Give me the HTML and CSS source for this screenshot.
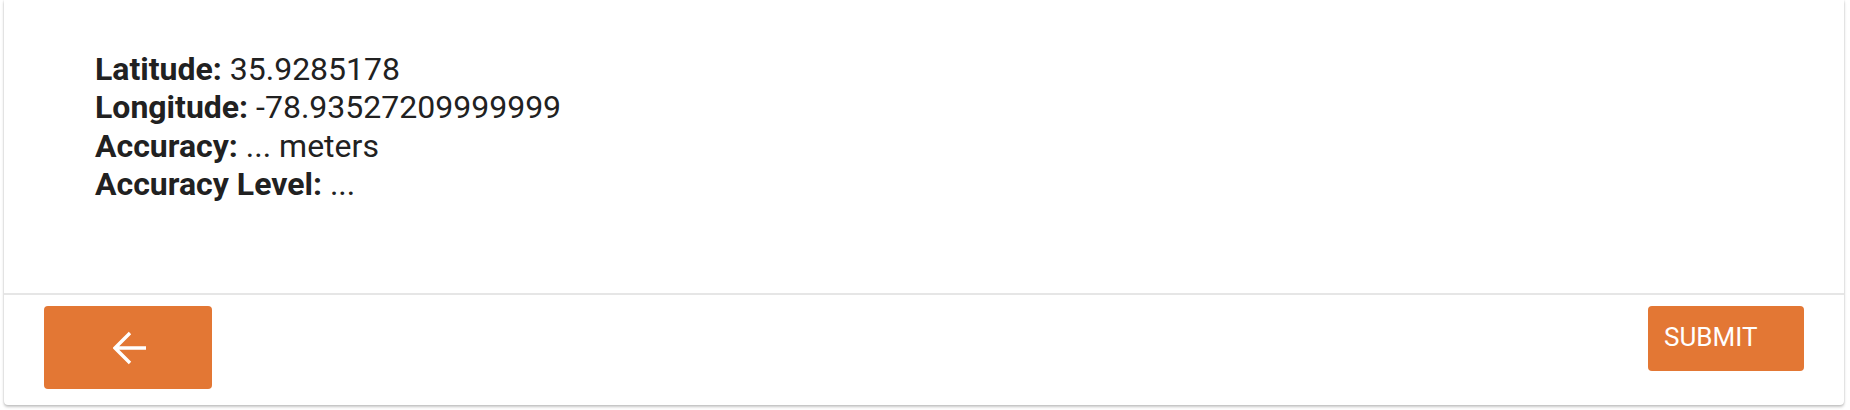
FILE: index.html
```html
<!DOCTYPE html>
<html lang="en">
<head>
<meta charset="utf-8">
<title>Location</title>
<link rel="stylesheet" href="styles.css">
</head>
<body>
<div class="page">
  <div class="card">
    <div class="card-body">
      <div class="info-line"><span class="label">Latitude:</span> 35.9285178</div>
      <div class="info-line"><span class="label">Longitude:</span> -78.93527209999999</div>
      <div class="info-line"><span class="label">Accuracy:</span> ... meters</div>
      <div class="info-line"><span class="label">Accuracy Level:</span> ...</div>
    </div>
    <div class="card-footer">
      <button class="btn btn-back" type="button" aria-label="Back">
        <svg class="icon-back" width="34" height="34" viewBox="0 0 34 34" aria-hidden="true">
          <path d="M17 2 L2 17 L17 32 M2 17 H33" fill="none" stroke="#ffffff" stroke-width="3.4"/>
        </svg>
      </button>
      <button class="btn btn-submit" type="button">SUBMIT</button>
    </div>
  </div>
</div>
</body>
</html>
```

FILE: styles.css
```css
html, body {
  margin: 0;
  padding: 0;
  background: #ffffff;
}

.page {
  padding: 0 6px 5px 4px;
  font-family: Roboto, "Liberation Sans", Arial, sans-serif;
  color: #212121;
}

.card {
  background: #ffffff;
  border-radius: 0 0 4px 4px;
  box-shadow: 0 2px 3px rgba(0, 0, 0, 0.22), 0 0 2px rgba(0, 0, 0, 0.14);
  height: 405px;
  display: flex;
  flex-direction: column;
}

.card-body {
  box-sizing: border-box;
  height: 293px;
  padding: 50px 0 0 91px;
  font-size: 32px;
  line-height: 38.4px;
  font-weight: 400;
}

.label {
  font-weight: 700;
}

.card-footer {
  border-top: 2px solid #e6e6e6;
  flex: 1;
  display: flex;
  justify-content: space-between;
  align-items: flex-start;
  padding: 11px 40px 0 40px;
}

.btn {
  border: none;
  background: #e37734;
  color: #ffffff;
  border-radius: 4px;
  font-family: Roboto, "Liberation Sans", Arial, sans-serif;
  cursor: pointer;
  margin: 0;
}

.btn-back {
  width: 168px;
  height: 83px;
  display: flex;
  align-items: center;
  justify-content: center;
  padding: 0 0 0 4px;
}

.icon-back {
  display: block;
}

.btn-submit {
  width: 156px;
  height: 65px;
  font-size: 26px;
  text-align: left;
  padding: 0 0 3px 16px;
  line-height: 1;
}
```
